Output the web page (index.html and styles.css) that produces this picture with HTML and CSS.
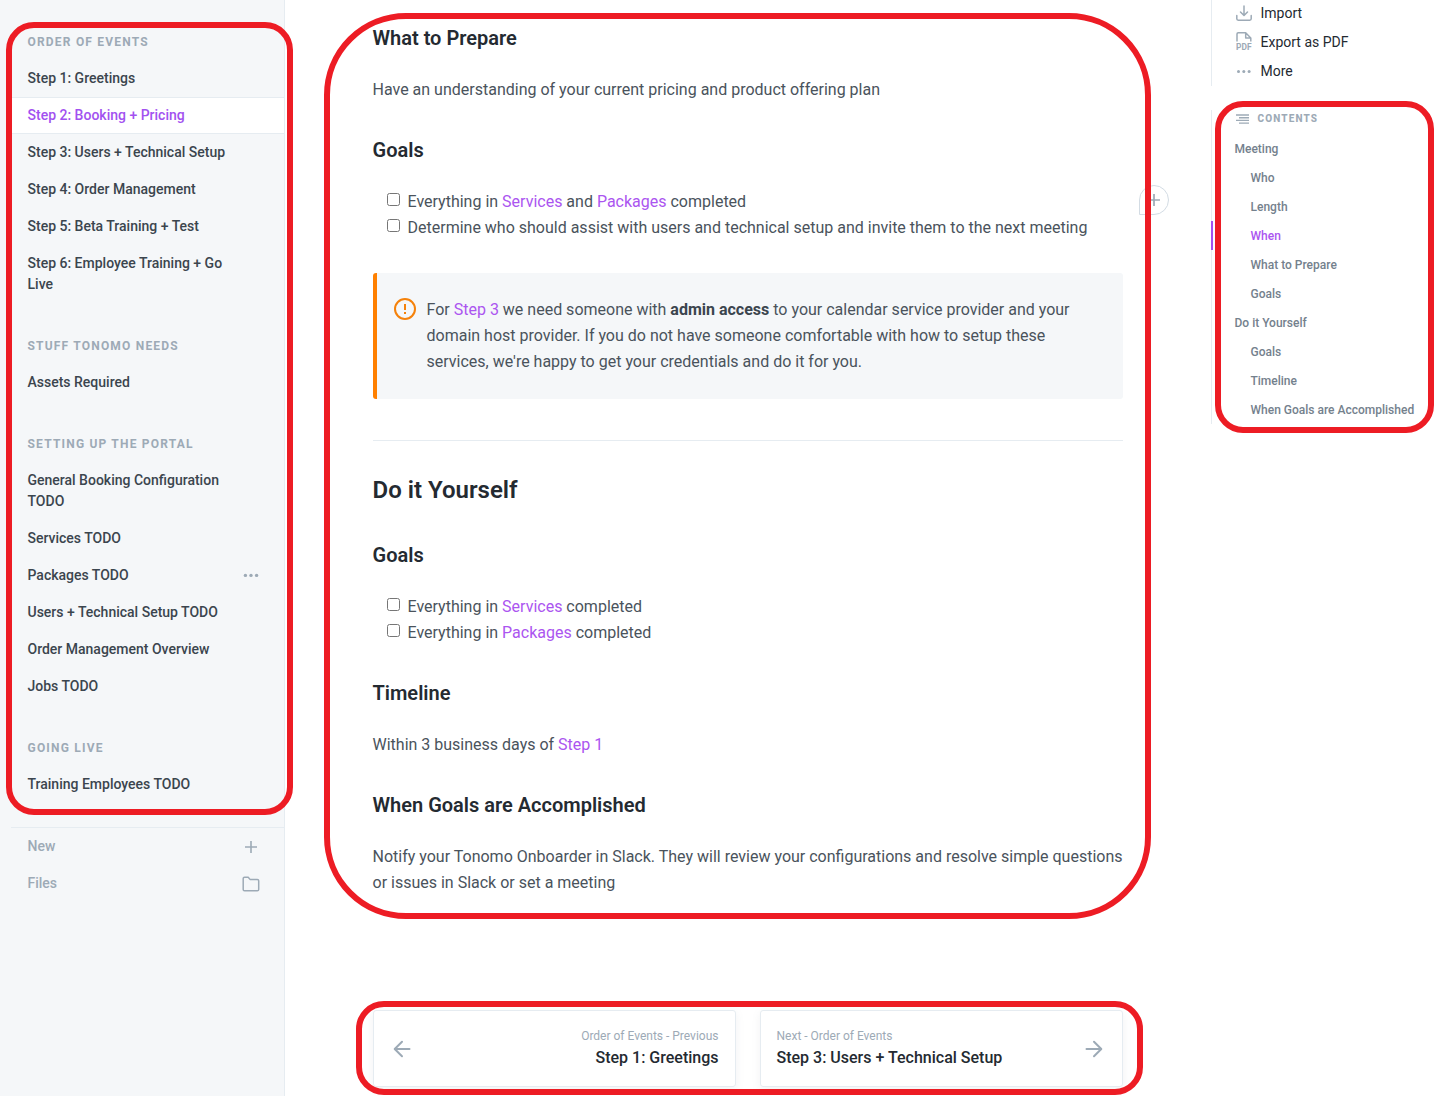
FILE: index.html
```html
<!DOCTYPE html>
<html lang="en">
<head>
<meta charset="utf-8">
<title>Step 2: Booking + Pricing</title>
<link rel="stylesheet" href="styles.css">
</head>
<body>
<div class="page">
  <aside class="sidebar">
    <nav class="nav">
      <h6 class="nav-title">Order of Events</h6>
      <a class="nav-item">Step 1: Greetings</a>
      <a class="nav-item active">Step 2: Booking + Pricing</a>
      <a class="nav-item">Step 3: Users + Technical Setup</a>
      <a class="nav-item">Step 4: Order Management</a>
      <a class="nav-item">Step 5: Beta Training + Test</a>
      <a class="nav-item">Step 6: Employee Training + Go Live</a>
      <h6 class="nav-title">Stuff Tonomo Needs</h6>
      <a class="nav-item">Assets Required</a>
      <h6 class="nav-title">Setting up the Portal</h6>
      <a class="nav-item">General Booking Configuration TODO</a>
      <a class="nav-item">Services TODO</a>
      <a class="nav-item"><span>Packages TODO</span>
        <svg class="nav-icon" width="18" height="18" viewBox="0 0 18 18" fill="currentColor"><circle cx="3.4" cy="8.4" r="1.7"/><circle cx="9" cy="8.4" r="1.7"/><circle cx="14.6" cy="8.4" r="1.7"/></svg></a>
      <a class="nav-item">Users + Technical Setup TODO</a>
      <a class="nav-item">Order Management Overview</a>
      <a class="nav-item">Jobs TODO</a>
      <h6 class="nav-title">Going Live</h6>
      <a class="nav-item">Training Employees TODO</a>
    </nav>
    <div class="nav-tools">
      <a class="nav-item muted"><span>New</span>
        <svg class="nav-icon" width="18" height="18" viewBox="0 0 18 18" fill="none" stroke="currentColor" stroke-width="1.6"><path d="M9 3v12M3 9h12"/></svg></a>
      <a class="nav-item muted"><span>Files</span>
        <svg class="nav-icon" width="18" height="18" viewBox="0 0 18 18" fill="none" stroke="currentColor" stroke-width="1.5" stroke-linejoin="round"><path d="M1.2 3.5Q1.2 2.2 2.5 2.2H6.2L8 4.4H15.3Q16.7 4.4 16.7 5.7V14.5Q16.7 15.8 15.3 15.8H2.5Q1.2 15.8 1.2 14.5Z"/></svg></a>
    </div>
    <div class="mark mark-nav"></div>
  </aside>

  <main class="content">
    <h3>What to Prepare</h3>
    <p>Have an understanding of your current pricing and product offering plan</p>
    <h3>Goals</h3>
    <ul class="tasks">
      <li><i class="box"></i>Everything in <a>Services</a> and <a>Packages</a> completed</li>
      <li><i class="box"></i>Determine who should assist with users and technical setup and invite them to the next meeting</li>
    </ul>
    <div class="hint">
      <svg class="hint-icon" width="24" height="24" viewBox="0 0 24 24" fill="none" stroke="currentColor" stroke-width="2"><circle cx="12" cy="12" r="10"/><path d="M12 7v6M12 15v2"/></svg>
      <p>For <a>Step 3</a> we need someone with <strong>admin access</strong> to your calendar service provider and your domain host provider. If you do not have someone comfortable with how to setup these services, we're happy to get your credentials and do it for you.</p>
    </div>
    <hr>
    <h2>Do it Yourself</h2>
    <h3>Goals</h3>
    <ul class="tasks">
      <li><i class="box"></i>Everything in <a>Services</a> completed</li>
      <li><i class="box"></i>Everything in <a>Packages</a> completed</li>
    </ul>
    <h3>Timeline</h3>
    <p>Within 3 business days of <a>Step 1</a></p>
    <h3>When Goals are Accomplished</h3>
    <p>Notify your Tonomo Onboarder in Slack. They will review your configurations and resolve simple questions or issues in Slack or set a meeting</p>
    <div class="pager">
      <a class="card prev">
        <svg width="24" height="24" viewBox="0 0 24 24" fill="none" stroke="currentColor" stroke-width="2" stroke-linecap="round" stroke-linejoin="round"><path d="M19.5 12H4.8M12 4.7L4.7 12L12 19.3"/></svg>
        <span class="card-text"><small>Order of Events - Previous</small><b>Step 1: Greetings</b></span>
      </a>
      <a class="card next">
        <span class="card-text"><small>Next - Order of Events</small><b>Step 3: Users + Technical Setup</b></span>
        <svg width="24" height="24" viewBox="0 0 24 24" fill="none" stroke="currentColor" stroke-width="2" stroke-linecap="round" stroke-linejoin="round"><path d="M4.5 12H19.2M12 4.7L19.3 12L12 19.3"/></svg>
      </a>
    </div>
    <div class="comment"><svg width="14" height="14" viewBox="0 0 14 14" fill="none" stroke="currentColor" stroke-width="1.7"><path d="M7 1v12M1 7h12"/></svg></div>
    <div class="mark mark-content"></div>
    <div class="mark mark-pager"></div>
  </main>

  <aside class="rail">
    <div class="actions">
      <a><svg width="16" height="16" viewBox="0 0 16 16" fill="none" stroke="currentColor" stroke-width="1.5" stroke-linecap="round" stroke-linejoin="round"><path d="M8 1v9.3M4.5 7L8 10.5L11.5 7M.8 10.5v3.3Q.8 15.2 2.2 15.2H13.8Q15.2 15.2 15.2 13.8V10.5"/></svg>Import</a>
      <a><svg width="16" height="19" viewBox="0 0 16 19" fill="none" stroke="currentColor" stroke-width="1.5" stroke-linejoin="round"><path d="M1 9.5V2Q1 .8 2.2 .8H9.7L14.8 6V9.5M9.7 .8V6H14.8"/><text x="0" y="18.4" font-size="8.4" font-weight="700" textLength="15.6" fill="currentColor" stroke="none">PDF</text></svg>Export as PDF</a>
      <a><svg width="16" height="16" viewBox="0 0 16 16" fill="currentColor"><circle cx="2.5" cy="8.5" r="1.5"/><circle cx="7.8" cy="8.5" r="1.5"/><circle cx="13.1" cy="8.5" r="1.5"/></svg>More</a>
    </div>
    <nav class="toc">
      <div class="toc-title"><svg width="14" height="10" viewBox="0 0 14 10" fill="none" stroke="currentColor" stroke-width="1.4"><path d="M0 1h13M3 3.7h10M0 6.4h13M3 9.1h10"/></svg>Contents</div>
      <a>Meeting</a>
      <a class="sub">Who</a>
      <a class="sub">Length</a>
      <a class="sub current">When</a>
      <a class="sub">What to Prepare</a>
      <a class="sub">Goals</a>
      <a>Do it Yourself</a>
      <a class="sub">Goals</a>
      <a class="sub">Timeline</a>
      <a class="sub">When Goals are Accomplished</a>
    </nav>
    <div class="mark mark-toc"></div>
  </aside>
</div>
</body>
</html>
```
FILE: styles.css
```css
* { box-sizing: border-box; }
body {
  margin: 0;
  background: #fff;
  color: #3b454e;
  font-family: Roboto, "Liberation Sans", sans-serif;
}
h2, h3, h6, p, ul { margin: 0; padding: 0; }
svg { flex: none; display: block; }

.page {
  position: relative;
  display: flex;
  height: 1096px;
  overflow: hidden;
}

/* Sidebar */
.sidebar {
  width: 285px;
  flex: none;
  padding: 32px 0 0 11px;
  background: #f5f7f9;
  border-right: 1px solid #e6ecf1;
}
.nav { padding-bottom: 24px; }
.nav-title {
  margin: 33px 0 7px;
  padding-left: 16.5px;
  color: #9daab6;
  font-size: 12px;
  font-weight: 700;
  line-height: 21px;
  letter-spacing: 1.2px;
  text-transform: uppercase;
}
.nav-title:first-child { margin-top: 0; }
.nav-item {
  display: flex;
  justify-content: space-between;
  padding: 7px 24px 7px 16.5px;
  border: solid transparent;
  border-width: 1px 0;
  font-size: 14px;
  font-weight: 500;
  line-height: 21px;
}
.nav-item:not(:has(svg)) { padding-right: 48px; }
.nav-item.active {
  background: #fff;
  border-color: #e6ecf1;
  color: #a251f0;
}
.nav-item.muted { color: #9daab6; }
.nav-icon { margin-top: 2px; color: #9daab6; }
.nav-tools { border-top: 1px solid #e6ecf1; }

/* Article */
.content {
  width: 750px;
  flex: none;
  margin-left: 87.5px;
  padding-top: 25px;
  color: #4a535c;
  font-size: 16px;
  line-height: 26px;
}
.content h3 {
  margin: 34px 0 26px;
  color: #242a31;
  font-size: 20px;
  font-weight: 600;
  line-height: 26px;
}
.content > h3:first-child { margin-top: 0; }
.content h2 {
  margin: 33px 0 36px;
  color: #242a31;
  font-size: 24px;
  font-weight: 600;
  line-height: 32px;
}
.content p a, .tasks a { color: #ab55f0; }
.tasks { list-style: none; padding-left: 14px; }
.tasks li { display: block; white-space: pre; }
.box {
  display: inline-block;
  width: 13px;
  height: 13px;
  margin-right: 8px;
  border: 1px solid #767676;
  border-radius: 2.5px;
  background: #fff;
  vertical-align: 1px;
}
.hint {
  display: flex;
  gap: 10px;
  margin-top: 32px;
  padding: 24px 24px 24px 16px;
  border-left: 4px solid #ff8000;
  border-radius: 3px;
  background: #f5f7f9;
}
.hint-icon { color: #f5820b; }
.hint strong { color: #3b454e; font-weight: 700; }
hr {
  height: 1px;
  margin: 41px 0 0;
  border: 0;
  background: #e6ecf1;
}

/* Previous / next links */
.pager {
  display: grid;
  grid-template-columns: 1fr 1fr;
  gap: 24px;
  margin-top: 114px;
}
.card {
  display: flex;
  align-items: center;
  justify-content: space-between;
  height: 77px;
  padding: 0 16px;
  border: 1px solid #e6ecf1;
  border-radius: 3px;
  box-shadow: 0 3px 8px rgba(116, 129, 141, .1);
  color: #9daab6;
}
.card-text { display: flex; flex-direction: column; }
.prev .card-text { text-align: right; }
.card small { margin-top: -1px; padding-bottom: 1px; font-size: 12px; line-height: 18px; }
.card b { color: #242a31; font-size: 16px; font-weight: 500; line-height: 24px; }

/* Right rail */
.rail {
  flex: 1;
  margin-left: 88.5px;
}
.actions, .toc { border-left: 1px solid #e6ecf1; }
.actions {
  height: 86px;
  padding-left: 24px;
  color: #242a31;
  font-size: 14px;
}
.actions a {
  display: flex;
  align-items: center;
  gap: 8.5px;
  height: 29px;
}
.actions a:first-child { height: 26px; margin-bottom: 1px; }
.actions svg { color: #9daab6; }
.toc {
  margin-top: 24px;
  height: 314px;
  color: #74818d;
  font-size: 12px;
  font-weight: 500;
}
.toc-title {
  display: flex;
  align-items: center;
  gap: 7.5px;
  height: 24px;
  padding: 0 0 7px 24px;
  color: #9daab6;
  font-size: 10px;
  font-weight: 800;
  letter-spacing: 1.15px;
  text-transform: uppercase;
}
.toc a {
  display: block;
  height: 29px;
  padding-left: 22.5px;
  line-height: 31px;
  white-space: nowrap;
}
.toc a.sub { padding-left: 38.5px; }
.toc a.current {
  margin-left: -1px;
  padding-left: 37.5px;
  border-left: 2px solid #a251f0;
  color: #ab55f0;
}

/* Overlays */
.comment {
  position: absolute;
  left: 1139px;
  top: 185px;
  display: grid;
  place-items: center;
  width: 30px;
  height: 30px;
  border: 1px solid #d3dce4;
  border-radius: 15px 15px 15px 0;
  color: #9daab6;
}
.mark {
  position: absolute;
  border: 6px solid #ed1c24;
  border-radius: 28px;
}
.mark-nav { left: 6px; top: 22px; width: 287px; height: 793px; }
.mark-content { left: 324px; top: 13px; width: 827px; height: 906px; border-radius: 82px; }
.mark-pager { left: 356px; top: 1001px; width: 787px; height: 94px; }
.mark-toc { left: 1215px; top: 101px; width: 219px; height: 332px; }
```
